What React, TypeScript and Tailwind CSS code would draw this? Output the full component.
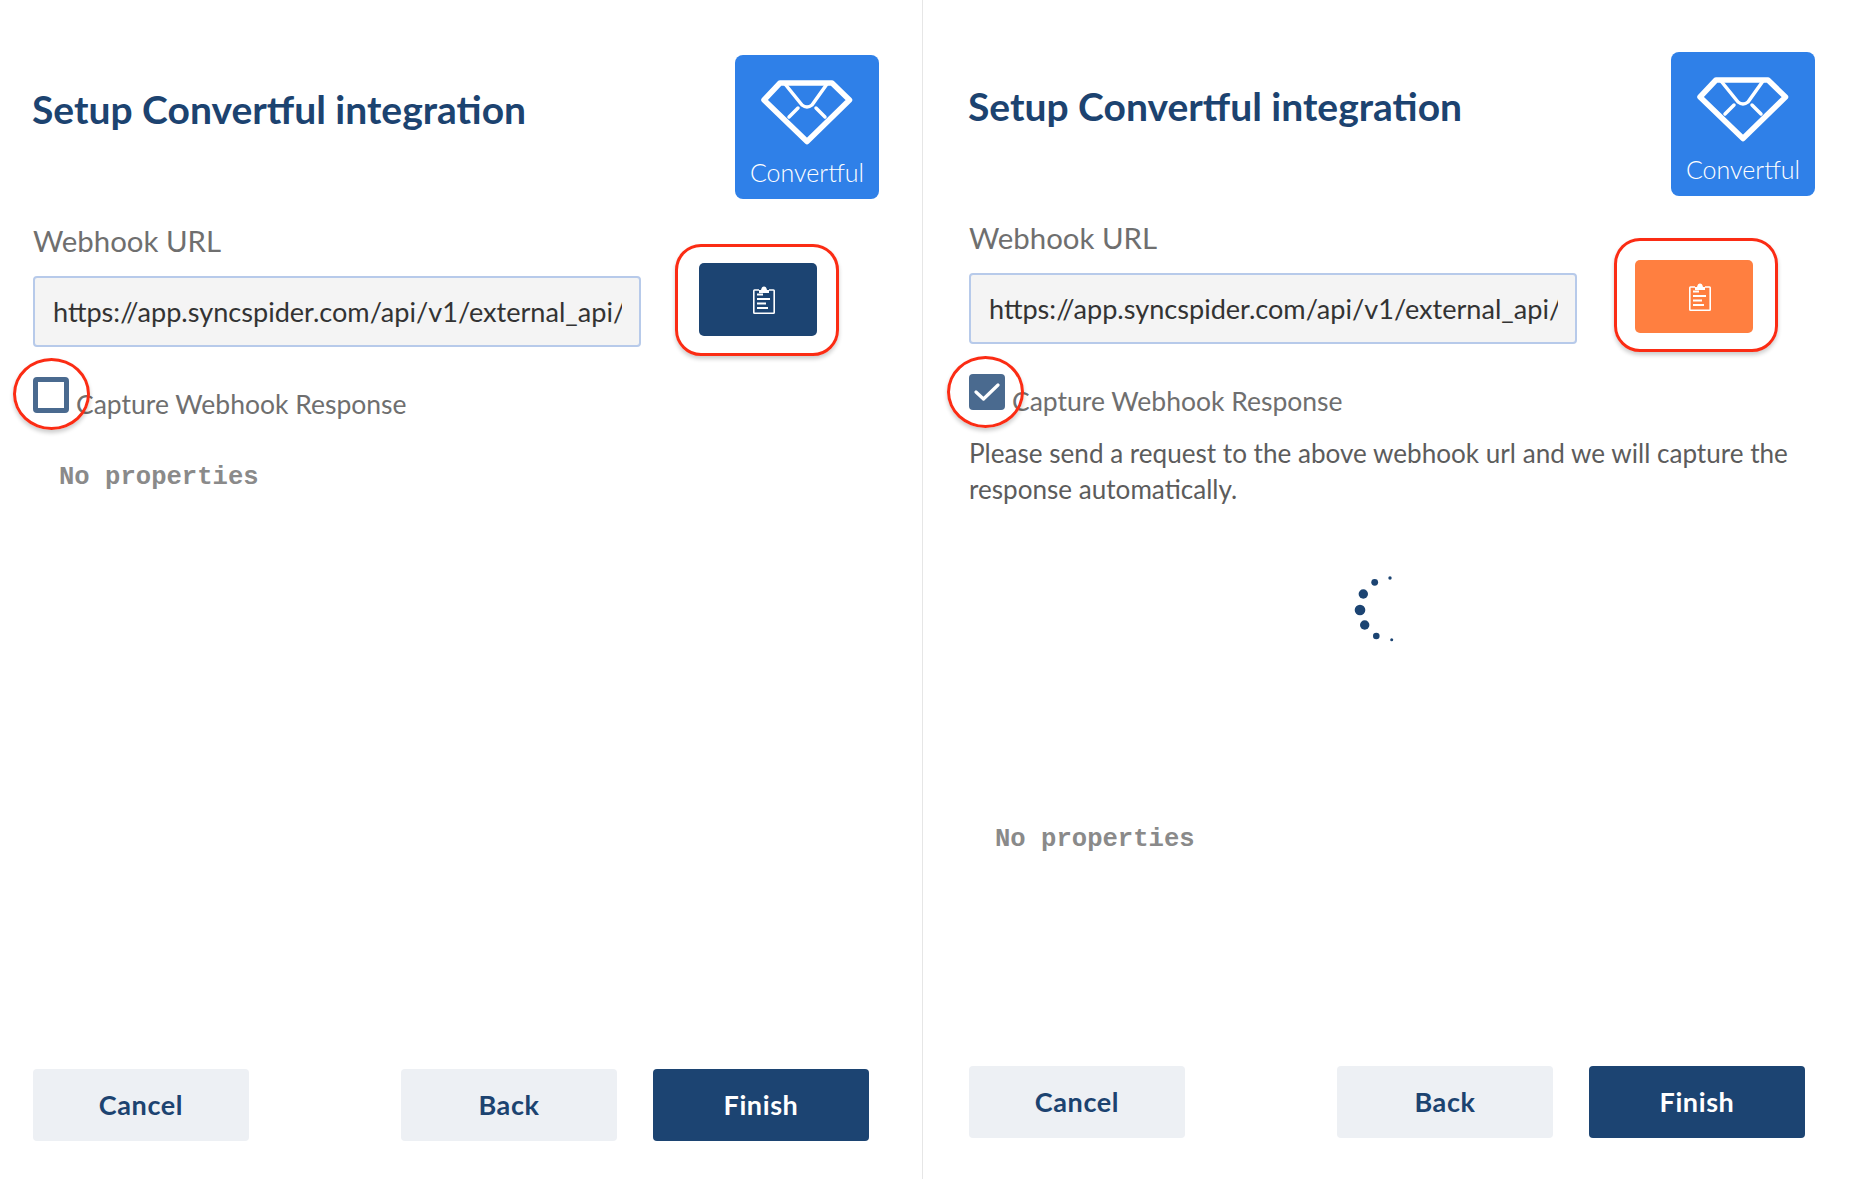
import React from "react";

function Logo() {
  return (
    <div className="flex h-[144px] w-[144px] shrink-0 flex-col items-center rounded-[8px] bg-[#2f80e8]">
      <svg width="144" height="100" viewBox="0 0 144 100" fill="none" stroke="#fff" strokeLinejoin="round" strokeLinecap="round">
        <path d="M45 28H97L114.5 45L72 86.5L29 45Z" strokeWidth="5.5" />
        <path d="M50 29L67 50Q72 54 77 50L92 29" strokeWidth="3.5" />
        <path d="M54 62L63 53M90 62L81 53" strokeWidth="3.5" />
      </svg>
      <span className="font-['Lato'] text-[25px] leading-[34px] font-light text-white">Convertful</span>
    </div>
  );
}

function Clip() {
  return (
    <svg width="22" height="28" viewBox="0 0 22 28" fill="none" className="ml-[12px]">
      <path d="M6 4H1.5C1 4 .8 4.3 .8 4.7V26.5C.8 27 1 27.2 1.5 27.2H20.5C21 27.2 21.2 27 21.2 26.5V4.7C21.2 4.3 21 4 20.5 4H16" stroke="#fff" strokeWidth="1.6" />
      <path d="M6 7V4H8C8.5 1.5 9.5 .5 11 .5S13.5 1.5 14 4H16V7Z" fill="#fff" />
      <path d="M4 8.5H10M4 13H17M4 17.5H13M4 22H15" stroke="#fff" strokeWidth="1.8" />
    </svg>
  );
}

function Spinner() {
  return (
    <svg width="42" height="70" viewBox="0 0 42 70" fill="#1c4472" className="ml-[385px] mt-[68px] shrink-0">
      <circle cx="36" cy="3" r="1.7" />
      <circle cx="20.7" cy="7.3" r="3.4" />
      <circle cx="9.3" cy="19" r="4.7" />
      <circle cx="6" cy="35" r="5.3" />
      <circle cx="10.7" cy="50" r="4.7" />
      <circle cx="22.3" cy="61" r="3.3" />
      <circle cx="37.7" cy="64.7" r="1.5" />
    </svg>
  );
}

function Panel({ checked }: { checked: boolean }) {
  return (
    <section
      className={
        checked
          ? "relative flex h-full w-[935px] flex-col pl-[46px] pr-[43px] pt-[52px] pb-[41px]"
          : "relative flex h-full w-[923px] shrink-0 flex-col border-r border-[#e6e6e6] pl-[33px] pr-[43px] pt-[55px] pb-[38px]"
      }
    >
      <header className="flex items-start justify-between">
        <h1 className="-ml-[1px] mt-[30px] font-['Lato'] text-[39px] leading-[48px] font-bold text-[#1c4370]">Setup Convertful integration</h1>
        <Logo />
      </header>

      <div className="mt-[24px] flex items-start">
        <div className="w-[608px] shrink-0">
          <label className="block font-['Lato'] text-[29.4px] leading-[36px] text-[#6f6f6f]">Webhook URL</label>
          <input
            readOnly
            value="https://app.syncspider.com/api/v1/external_api/webhooks/convertful/8d1f"
            className="mt-[17px] h-[71px] w-full rounded-[4px] border-2 border-[#b7caea] bg-[#f4f4f4] pl-[18px] pr-[17px] font-['Lato'] text-[27.1px] text-[#333] outline-none"
          />
        </div>
        <button className={(checked ? "bg-[#ff7f40]" : "bg-[#1c4472]") + " ml-[58px] mt-[40px] flex h-[73px] w-[118px] items-center justify-center rounded-[5px]"}>
          <Clip />
        </button>
      </div>

      <div className="mt-[30px] flex items-start">
        <span className={(checked ? "bg-[#4a6a8f]" : "border-[5px] border-[#4a6a8f]") + " flex h-[36px] w-[36px] shrink-0 items-center justify-center rounded-[4px]"}>
          {checked && (
            <svg width="26" height="20" viewBox="0 0 26 20" fill="none" stroke="#fff" strokeWidth="3.2" strokeLinecap="round" strokeLinejoin="round">
              <path d="M2 10L9.5 17L24 3" />
            </svg>
          )}
        </span>
        <span className="ml-[7px] mt-[9px] font-['Lato'] text-[26.5px] leading-[36px] text-[#6f6f6f]">Capture Webhook Response</span>
      </div>

      {checked && (
        <>
          <p className="mt-[16px] font-['Lato'] text-[26.1px] leading-[36px] text-[#5c5c5c]">
            Please send a request to the above webhook url and we will capture the
            <br />
            response automatically.
          </p>
          <Spinner />
        </>
      )}

      <p className={(checked ? "mt-[177px]" : "mt-[38px]") + " pl-[26px] font-['Liberation_Mono'] text-[25.6px] leading-[36px] font-bold text-[#8a8a8a]"}>No properties</p>

      <footer className="mt-auto mr-[10px] flex items-center justify-between font-['Lato'] text-[27px] font-bold tracking-[0.6px] text-[#1c4370]">
        <button className="h-[72px] w-[216px] rounded-[4px] bg-[#edf0f4]">Cancel</button>
        <div className="flex gap-[36px]">
          <button className="h-[72px] w-[216px] rounded-[4px] bg-[#edf0f4]">Back</button>
          <button className="h-[72px] w-[216px] rounded-[4px] bg-[#1c4472] text-white">Finish</button>
        </div>
      </footer>

      {checked ? (
        <>
          <div className="absolute left-[24px] top-[356px] h-[72px] w-[77px] rounded-[50%] border-[3px] border-[#fb2c14] shadow-[0_3px_4px_rgba(0,0,0,0.2)]" />
          <div className="absolute left-[691px] top-[238px] h-[114px] w-[164px] rounded-[26px] border-[3px] border-[#fb2c14] shadow-[0_3px_4px_rgba(0,0,0,0.2)]" />
        </>
      ) : (
        <>
          <div className="absolute left-[13px] top-[358px] h-[72px] w-[77px] rounded-[50%] border-[3px] border-[#fb2c14] shadow-[0_3px_4px_rgba(0,0,0,0.2)]" />
          <div className="absolute left-[675px] top-[244px] h-[112px] w-[164px] rounded-[26px] border-[3px] border-[#fb2c14] shadow-[0_3px_4px_rgba(0,0,0,0.2)]" />
        </>
      )}
    </section>
  );
}

export default function App() {
  return (
    <main className="flex h-[1179px] w-[1858px] overflow-hidden bg-white">
      <Panel checked={false} />
      <Panel checked={true} />
    </main>
  );
}
